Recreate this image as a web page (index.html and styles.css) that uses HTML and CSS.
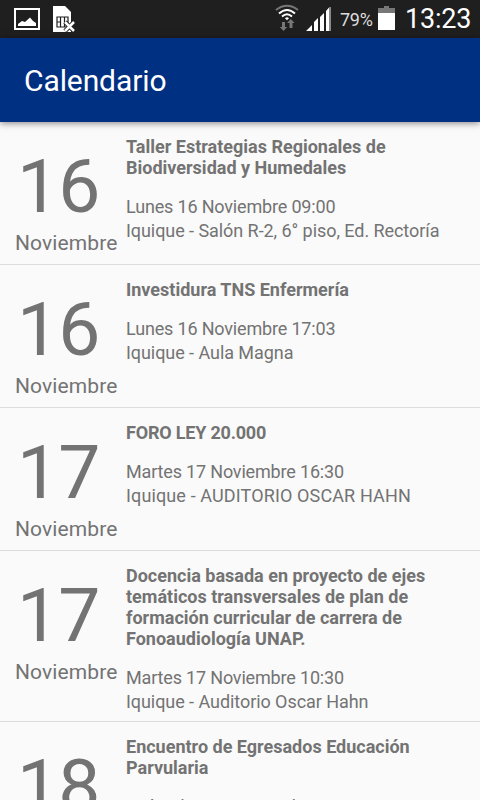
FILE: index.html
```html
<!DOCTYPE html>
<html lang="es">
<head>
    <meta charset="UTF-8">
    <meta name="viewport" content="width=device-width, initial-scale=1.0">
    <title>Calendario</title>
    <link rel="stylesheet" href="styles.css">
</head>
<body>
    <div class="status-bar">
        <svg class="icon-picture" width="26" height="22" viewBox="0 0 26 22">
            <rect x="1" y="1" width="24" height="20" fill="none" stroke="#fff" stroke-width="2"/>
            <path d="M4 18v-2l4-3 3 1 5-4.500 3 3.500 3 2v3z" fill="#fff"/>
        </svg>
        <svg class="icon-sim" width="23" height="26" viewBox="0 0 23 26">
            <path d="M0 0h12l6 6v20H0z" fill="#fff"/>
            <path d="M4 11h11v10H4zM7.500 11v10M11.500 11v10M4 16h3.500M11.500 16h3.500" fill="none" stroke="#1f1f1f" stroke-width="1.200"/>
            <path d="M12 16l9 9M21 16l-9 9" stroke="#1f1f1f" stroke-width="4.500"/>
            <path d="M12 16l9 9M21 16l-9 9" stroke="#fff" stroke-width="2.500"/>
        </svg>
        <div class="status-right">
            <svg class="icon-wifi" width="24" height="28" viewBox="0 0 24 28">
                <path d="M1 6Q12-2.500 23 6" fill="none" stroke="#777" stroke-width="2"/>
                <path d="M4 9.500Q12 2.500 20 9.500M7 12.500Q12 8 17 12.500" fill="none" stroke="#fff" stroke-width="2"/>
                <path d="M10 14.200Q12 12.500 14 14.200L12 16.200z" fill="#fff"/>
                <path d="M7 18h3v5h2.200l-3.700 4-3.700-4H7zM14.500 24v-5H12l3.800-4 3.800 4H17.500v5z" fill="#777"/>
            </svg>
            <svg class="icon-signal" width="25" height="24" viewBox="0 0 25 24">
                <path d="M0 24l6-6v6zM8 24v-9l4-4v13zM14 24V10l4-4v18zM20 24V4l3.500-4v24z" fill="#fff"/>
                <path d="M23.500 0H25v24h-1.500z" fill="#888"/>
            </svg>
            <span class="battery-level">79%</span>
            <svg class="icon-battery" width="17" height="24" viewBox="0 0 17 24">
                <path d="M0 2h6V0h5v2h6v5H0z" fill="#777"/>
                <path d="M0 7h17v17H0z" fill="#fff"/>
            </svg>
            <span class="clock">13:23</span>
        </div>
    </div>

    <header class="toolbar">
        <h1>Calendario</h1>
    </header>

    <main class="events">
        <article class="event">
            <div class="event-date">
                <div class="day">16</div>
                <div class="month">Noviembre</div>
            </div>
            <div class="event-info">
                <h2>Taller Estrategias Regionales de<br>Biodiversidad y Humedales</h2>
                <p class="time">Lunes 16 Noviembre 09:00</p>
                <p class="place">Iquique - Salón R-2, 6° piso, Ed. Rectoría</p>
            </div>
        </article>
        <article class="event">
            <div class="event-date">
                <div class="day">16</div>
                <div class="month">Noviembre</div>
            </div>
            <div class="event-info">
                <h2>Investidura TNS Enfermería</h2>
                <p class="time">Lunes 16 Noviembre 17:03</p>
                <p class="place">Iquique - Aula Magna</p>
            </div>
        </article>
        <article class="event">
            <div class="event-date">
                <div class="day">17</div>
                <div class="month">Noviembre</div>
            </div>
            <div class="event-info">
                <h2 class="tight">FORO LEY 20.000</h2>
                <p class="time">Martes 17 Noviembre 16:30</p>
                <p class="place wide">Iquique - AUDITORIO OSCAR HAHN</p>
            </div>
        </article>
        <article class="event">
            <div class="event-date">
                <div class="day">17</div>
                <div class="month">Noviembre</div>
            </div>
            <div class="event-info">
                <h2>Docencia basada en proyecto de ejes<br>temáticos transversales de plan de<br>formación curricular de carrera de<br>Fonoaudiología UNAP.</h2>
                <p class="time">Martes 17 Noviembre 10:30</p>
                <p class="place">Iquique - Auditorio Oscar Hahn</p>
            </div>
        </article>
        <article class="event">
            <div class="event-date">
                <div class="day">18</div>
                <div class="month">Noviembre</div>
            </div>
            <div class="event-info">
                <h2>Encuentro de Egresados Educación<br>Parvularia</h2>
                <p class="time">Miércoles 18 Noviembre</p>
            </div>
        </article>
    </main>
</body>
</html>
```
FILE: styles.css
```css
body {
    margin: 0;
    height: 800px;
    overflow: hidden;
    display: flex;
    flex-direction: column;
    background-color: #fafafa;
    color: #737373;
    font-family: Roboto, sans-serif;
}

h1, h2, p {
    margin: 0;
}

.status-bar {
    display: flex;
    align-items: flex-start;
    flex-shrink: 0;
    height: 38px;
    background-color: #1f1f1f;
    color: #fff;
}

.icon-picture {
    margin: 8px 0 0 14px;
}

.icon-sim {
    margin: 6px 0 0 13px;
}

.status-right {
    display: flex;
    margin-left: auto;
    padding-right: 9px;
}

.icon-wifi {
    margin-top: 4px;
}

.icon-signal {
    margin: 7px 0 0 7px;
}

.battery-level {
    width: 33px;
    margin-left: 9px;
    font-size: 18px;
    line-height: 40px;
    letter-spacing: -0.3px;
    color: #ddd;
}

.icon-battery {
    margin: 6px 0 0 5px;
}

.clock {
    width: 66px;
    margin-left: 10px;
    font-size: 27px;
    line-height: 39px;
    letter-spacing: -0.2px;
    white-space: nowrap;
}

.toolbar {
    display: flex;
    align-items: center;
    flex-shrink: 0;
    height: 84px;
    padding-left: 24px;
    background-color: #003082;
    color: #fff;
    box-shadow: 0 1px 7px rgba(0, 0, 0, 0.5);
    z-index: 1;
}

.toolbar h1 {
    font-size: 30px;
    font-weight: 400;
    letter-spacing: -0.1px;
}

.events {
    flex: 1;
    min-height: 0;
    overflow: hidden;
}

.event {
    display: flex;
    box-sizing: border-box;
    min-height: 143px;
    border-bottom: 1px solid #dcdcdc;
}

.event-date {
    width: 111px;
    padding-left: 15px;
}

.day {
    padding: 20px 0 0 2px;
    font-size: 75px;
    line-height: 88px;
    letter-spacing: -1px;
}

.month {
    padding-top: 1px;
    font-size: 21px;
    line-height: 25px;
    letter-spacing: 0.1px;
}

.event-info {
    padding: 14px 0 7px;
    font-size: 18px;
    white-space: nowrap;
}

.event-info h2 {
    margin-bottom: 17px;
    font-size: 18px;
    line-height: 21px;
}

.event-info .tight {
    letter-spacing: -0.2px;
}

.event-info p {
    line-height: 24px;
}

.time {
    letter-spacing: -0.17px;
}

.place {
    letter-spacing: -0.06px;
}

.place.wide {
    letter-spacing: 0.13px;
}
```
